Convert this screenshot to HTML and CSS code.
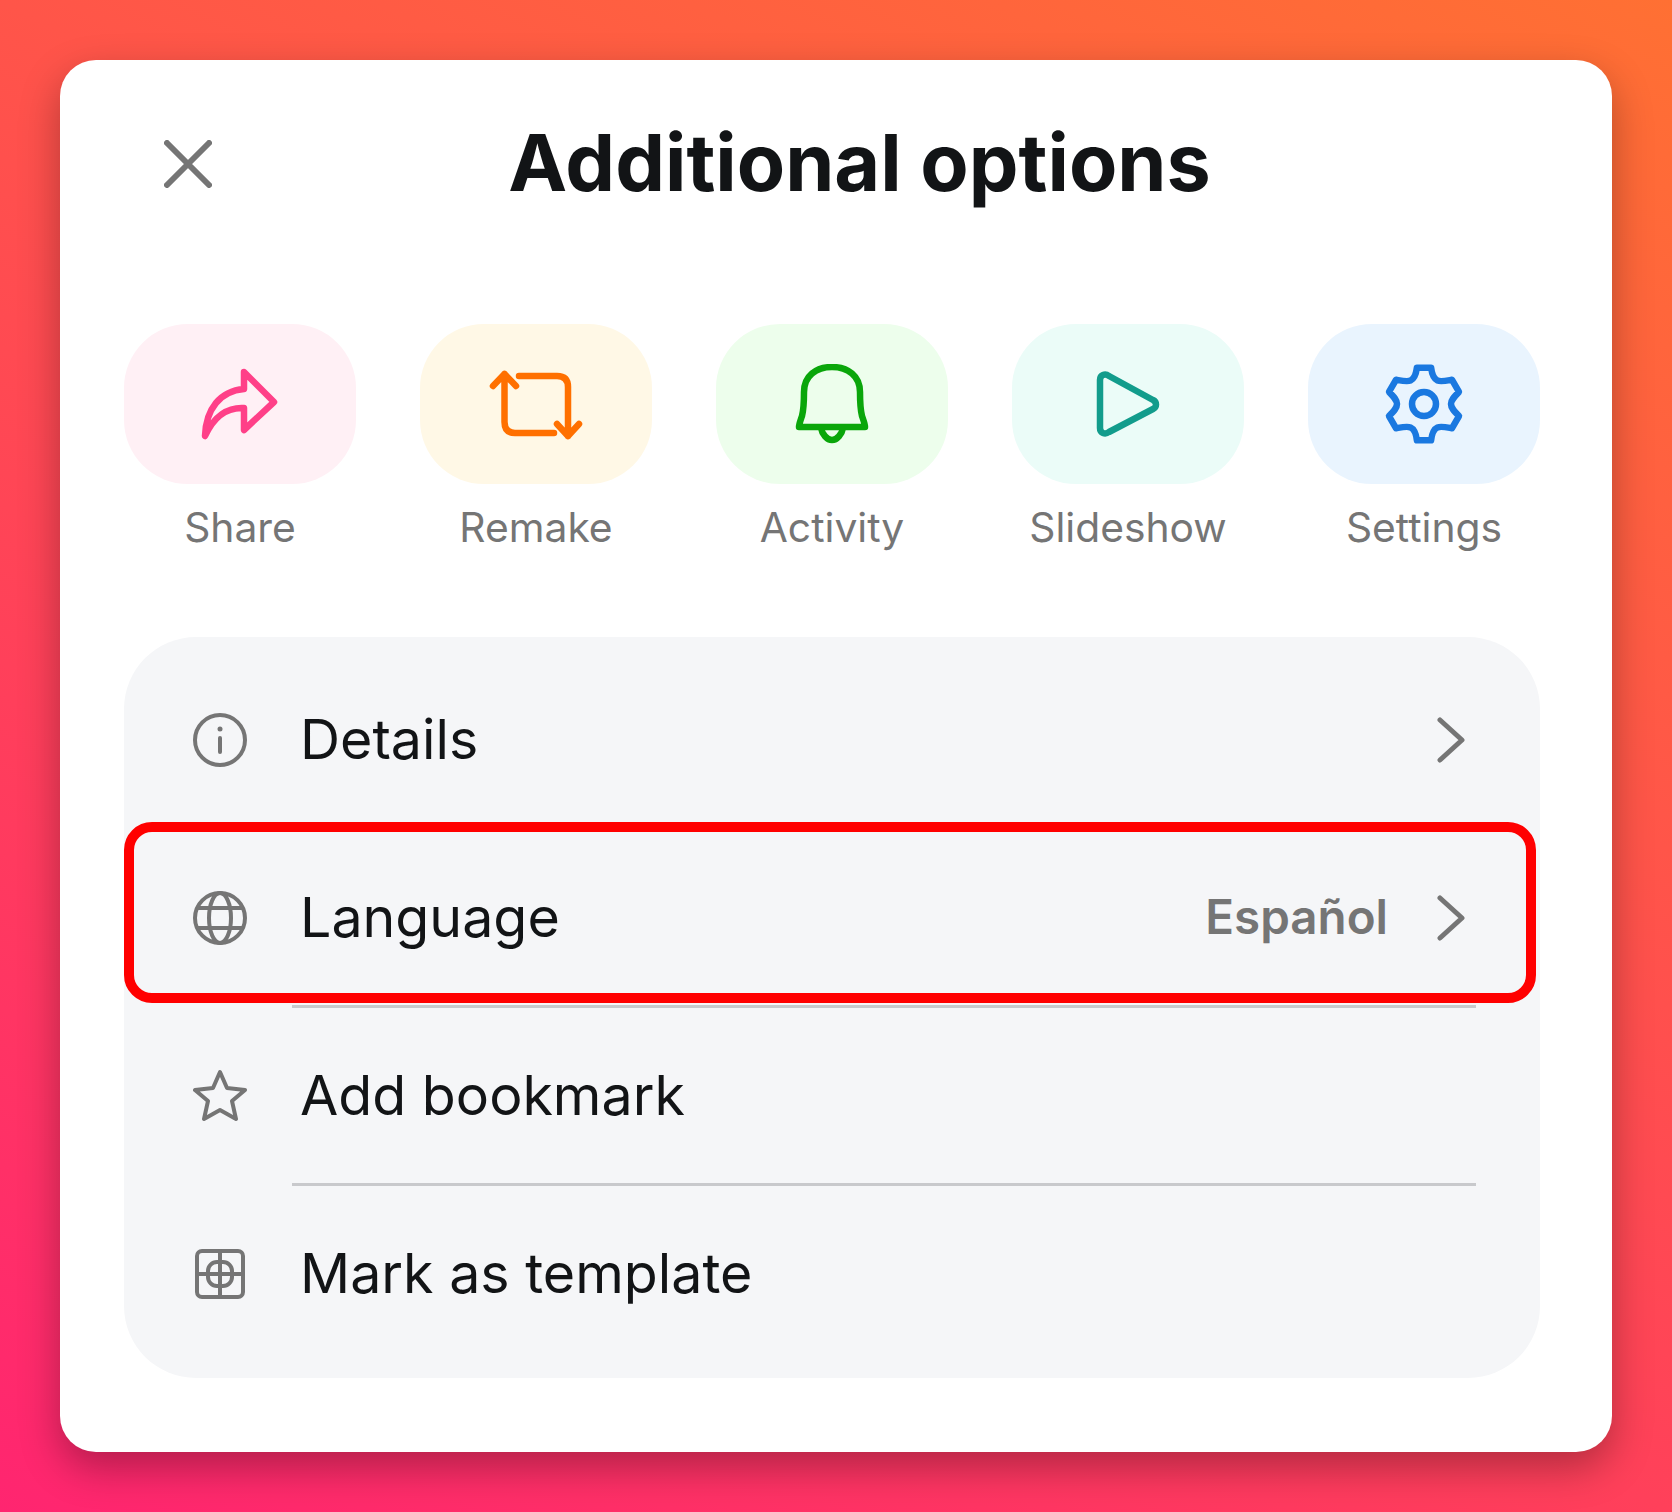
FILE: index.html
```html
<!DOCTYPE html>
<html lang="en">
<head>
<meta charset="utf-8">
<title>Additional options</title>
<link rel="stylesheet" href="styles.css">
</head>
<body>
<main class="card">
  <header class="head">
    <svg class="close" viewBox="0 0 48 48"><path d="M3 3 45 45M45 3 3 45"/></svg>
    <h1 class="title">Additional options</h1>
  </header>
  <section class="actions">
    <div class="action">
      <div class="tile tile-pink"><svg class="ai" viewBox="0 0 80 80"><path d="M5 72C6 45 20 27 44 25V8L74 38 44 66V44C28 43 14 52 5 72Z"/></svg></div>
      <span class="label">Share</span>
    </div>
    <div class="action">
      <div class="tile tile-orange"><svg class="ai" viewBox="0 0 96 80"><path d="M16.500 10V58Q16.500 69 27 69H66M31 12H69Q80 12 80 23V72M5 22 16.500 10 28 22M69 60 80 72 91 60"/></svg></div>
      <span class="label">Remake</span>
    </div>
    <div class="action">
      <div class="tile tile-green"><svg class="ai" viewBox="0 0 80 80"><path d="M7 63C7 60 8 58 10 52 11 48 12 44 12 28 12 12 24 3 40 3S68 12 68 28C68 44 69 48 70 52 72 58 73 60 73 63ZM29 64C30 70 35 76 40 76S50 70 51 64"/></svg></div>
      <span class="label">Activity</span>
    </div>
    <div class="action">
      <div class="tile tile-teal"><svg class="ai" viewBox="0 0 80 80"><path d="M12 16C12 11 17 9 21 12L65 36C69 38 69 43 65 45L21 68C17 71 12 69 12 64Z"/></svg></div>
      <span class="label">Slideshow</span>
    </div>
    <div class="action">
      <div class="tile tile-blue"><svg class="ai" viewBox="0 0 80 80"><path d="M32.900 3.700H47.100C48 11 50 15 53.500 16.600 57 18 61 17 67.900 15.700L75 27.900C70 33 67 36 67 40 67 44 70 47 75 52.100L67.900 64.300C61 63 57 62 53.500 63.400 50 65 48 69 47.100 76.300H32.900C32 69 30 65 26.500 63.400 23 62 19 63 12.100 64.300L5 52.100C10 47 13 44 13 40 13 36 10 33 5 27.900L12.100 15.700C19 17 23 18 26.500 16.600 30 15 32 11 32.900 3.700Z"/><circle cx="40" cy="40" r="12"/></svg></div>
      <span class="label">Settings</span>
    </div>
  </section>
  <section class="panel">
    <div class="row">
      <svg class="ri" viewBox="0 0 54 54"><circle cx="27" cy="27" r="25"/><path d="M27 25V39"/><circle class="dot" cx="27" cy="16" r="2.500"/></svg>
      <span class="name">Details</span>
      <svg class="chev" viewBox="0 0 28 46"><path d="M3 3 25 23 3 43"/></svg>
    </div>
    <div class="row">
      <svg class="ri" viewBox="0 0 54 54"><circle cx="27" cy="27" r="25"/><ellipse cx="27" cy="27" rx="11" ry="25"/><path d="M5 17H49M5 37H49"/></svg>
      <span class="name">Language</span>
      <span class="value">Español</span>
      <svg class="chev" viewBox="0 0 28 46"><path d="M3 3 25 23 3 43"/></svg>
    </div>
    <div class="row">
      <svg class="ri" viewBox="0 0 54 54"><path d="M27 3 34 19 52 21 39 32 43 50 27 41 11 50 15 32 2 21 20 19Z"/></svg>
      <span class="name">Add bookmark</span>
    </div>
    <div class="row">
      <svg class="ri" viewBox="0 0 54 54"><rect x="4" y="4" width="46" height="46" rx="5"/><rect x="15" y="15" width="24" height="24" rx="9"/><path d="M27 4V50M4 27H50"/></svg>
      <span class="name">Mark as template</span>
    </div>
    <div class="mark"></div>
  </section>
</main>
</body>
</html>
```
FILE: styles.css
```css
* { box-sizing: border-box; }
html, body { margin: 0; height: 100%; }
body {
  width: 1672px;
  height: 1512px;
  padding: 60px;
  overflow: hidden;
  background: linear-gradient(27deg, #ff2570 0%, #ff7033 100%);
  font-family: Inter, "Noto Sans", sans-serif;
}
.card {
  height: 1392px;
  padding: 0 64px;
  background: #fff;
  border-radius: 36px;
  box-shadow: 0 16px 40px rgba(0, 0, 0, .3);
}
.head {
  position: relative;
  height: 264px;
  display: flex;
  justify-content: center;
  align-items: flex-start;
  padding-top: 56px;
}
.close {
  position: absolute;
  left: 40px;
  top: 80px;
  width: 48px;
  height: 48px;
  fill: none;
  stroke: #757575;
  stroke-width: 6;
  stroke-linecap: round;
}
.title {
  margin: 0 0 0 47px;
  font-size: 79px;
  line-height: 92px;
  font-weight: 700;
  color: #121416;
}
.actions { display: flex; gap: 64px; }
.action { width: 232px; display: flex; flex-direction: column; align-items: center; }
.tile {
  width: 232px;
  height: 160px;
  border-radius: 64px;
  display: flex;
  align-items: center;
  justify-content: center;
}
.ai { width: 80px; height: 80px; fill: none; stroke-width: 6.500; stroke-linecap: round; stroke-linejoin: round; }
.tile-pink { background: #fff0f5; }
.tile-pink .ai { stroke: #ff4088; }
.tile-orange { background: #fff8e6; }
.tile-orange .ai { width: 96px; stroke: #ff7000; }
.tile-green { background: #edfeec; }
.tile-green .ai { stroke: #0aa60a; }
.tile-teal { background: #ebfcf8; }
.tile-teal .ai { stroke: #129c8c; }
.tile-blue { background: #e9f4fe; }
.tile-blue .ai { stroke: #1a78e0; }
.label {
  margin-top: 19px;
  font-size: 40.800px;
  line-height: 48px;
  color: #757575;
}
.panel {
  position: relative;
  margin-top: 86px;
  width: 1416px;
  height: 741px;
  padding: 14px 0;
  background: #f5f6f8;
  border-radius: 72px;
}
.row {
  position: relative;
  height: 178px;
  display: flex;
  align-items: center;
  padding: 0 75px 0 69px;
}
.row + .row::before {
  content: "";
  position: absolute;
  top: -2px;
  left: 168px;
  right: 64px;
  height: 3px;
  background: #c8c9cc;
}
.ri { width: 54px; height: 54px; fill: none; stroke: #757575; stroke-width: 4; stroke-linejoin: round; stroke-linecap: round; flex: none; }
.ri .dot { fill: #757575; stroke: none; }
.name {
  margin-left: 53px;
  padding-bottom: 2px;
  flex: 1;
  font-size: 55.500px;
  line-height: 68px;
  color: #121416;
}
.value {
  margin-right: 49px;
  padding-bottom: 3px;
  font-size: 47.500px;
  font-weight: 600;
  color: #757575;
}
.chev { width: 28px; height: 46px; fill: none; stroke: #757575; stroke-width: 5; stroke-linecap: round; stroke-linejoin: round; flex: none; }
.mark {
  position: absolute;
  left: 0;
  top: 185px;
  width: 1412px;
  height: 181px;
  border: 10px solid #ff0000;
  border-radius: 28px;
}
```
